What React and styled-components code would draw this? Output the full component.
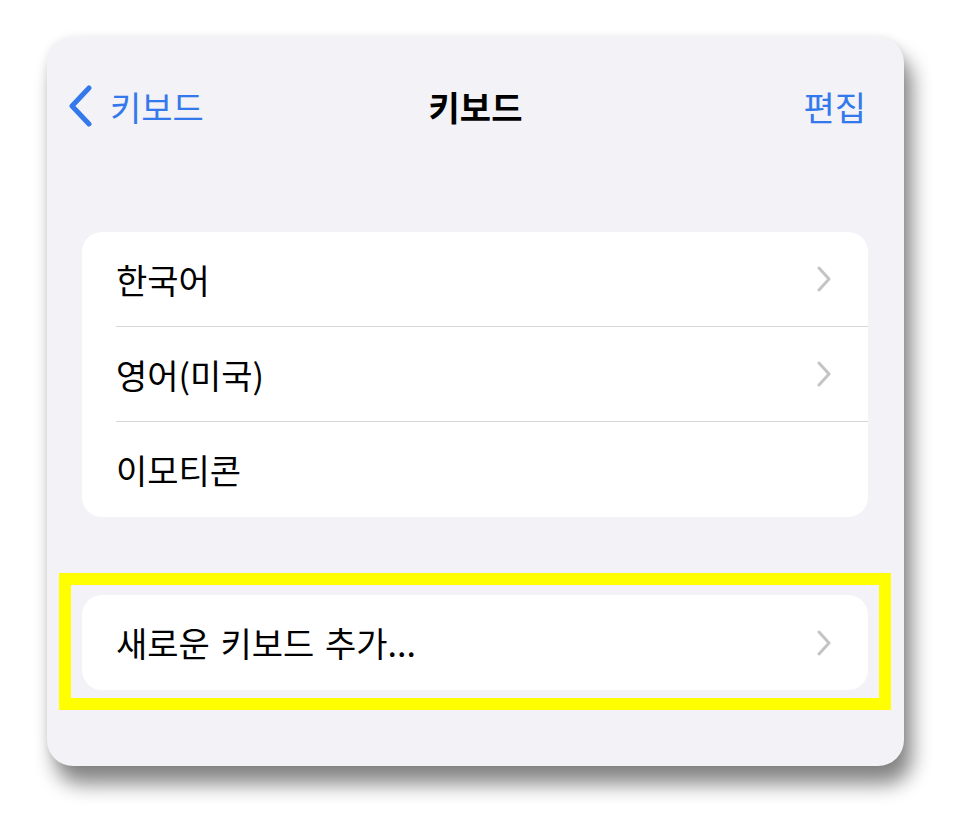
import React from "react";
import styled, { createGlobalStyle } from "styled-components";

const Global = createGlobalStyle`
  html, body { margin: 0; padding: 0; background: #ffffff; }
  body { font-family: "Noto Sans CJK KR", "Noto Sans", sans-serif; }
`;

const Page = styled.div`
  width: 966px;
  height: 837px;
  padding: 37px 0 0 47px;
  box-sizing: border-box;
  background: #fff;
`;

const Screen = styled.div`
  width: 857px;
  height: 729px;
  box-sizing: border-box;
  background: #f2f2f7;
  border-radius: 26px;
  box-shadow: 8px 18px 20px rgba(0, 0, 0, 0.48), 0 0 10px rgba(0, 0, 0, 0.08);
  display: flex;
  flex-direction: column;
`;

const NavBar = styled.div`
  margin-top: 44px;
  height: 50px;
  display: grid;
  grid-template-columns: 1fr auto 1fr;
  align-items: center;
  padding: 0 38px;
`;

const BackButton = styled.div`
  margin-left: -18px;
  display: flex;
  align-items: center;
  gap: 16px;
  color: #3479ec;
  font-size: 34px;
`;

const Title = styled.div`
  font-size: 34px;
  font-weight: 700;
  color: #000;
`;

const EditButton = styled.div`
  justify-self: end;
  color: #3479ec;
  font-size: 34px;
`;

const Group = styled.div`
  background: #fff;
  border-radius: 20px;
  overflow: hidden;
  margin: ${(p) => (p.$inset ? "0" : "0 36px 0 35px")};
  margin-top: ${(p) => p.$top || 0}px;
`;

const Row = styled.div`
  height: 95px;
  display: flex;
  align-items: center;
  margin-left: 34px;
  padding-right: 36px;
  box-sizing: border-box;
  border-bottom: ${(p) => (p.$last ? "none" : "1px solid #d6d6d9")};
`;

const RowLabel = styled.div`
  flex: 1;
  font-size: 34px;
  color: #000;
  word-spacing: 3px;
`;

const Highlight = styled.div`
  margin: 56px 13px 0 12px;
  border: 12px solid #ffff00;
  padding: 10px 11px 8px;
`;

const Chevron = () => (
  <svg width="16" height="26" viewBox="0 0 16 26">
    <path d="M3 2 L13 13 L3 24" fill="none" stroke="#c4c4c7" strokeWidth="3" strokeLinecap="round" strokeLinejoin="round" />
  </svg>
);

const BackChevron = () => (
  <svg width="27" height="42" viewBox="0 0 27 42">
    <path d="M22 3 L5 21 L22 39" fill="none" stroke="#3479ec" strokeWidth="5" strokeLinecap="round" strokeLinejoin="round" />
  </svg>
);

export default function App() {
  return (
    <>
      <Global />
      <Page>
        <Screen>
          <NavBar>
            <BackButton>
              <BackChevron />
              <span>키보드</span>
            </BackButton>
            <Title>키보드</Title>
            <EditButton>편집</EditButton>
          </NavBar>
          <Group $top={101}>
            <Row>
              <RowLabel>한국어</RowLabel>
              <Chevron />
            </Row>
            <Row>
              <RowLabel>영어(미국)</RowLabel>
              <Chevron />
            </Row>
            <Row $last>
              <RowLabel>이모티콘</RowLabel>
            </Row>
          </Group>
          <Highlight>
            <Group $inset>
              <Row $last>
                <RowLabel>새로운 키보드 추가...</RowLabel>
                <Chevron />
              </Row>
            </Group>
          </Highlight>
        </Screen>
      </Page>
    </>
  );
}
